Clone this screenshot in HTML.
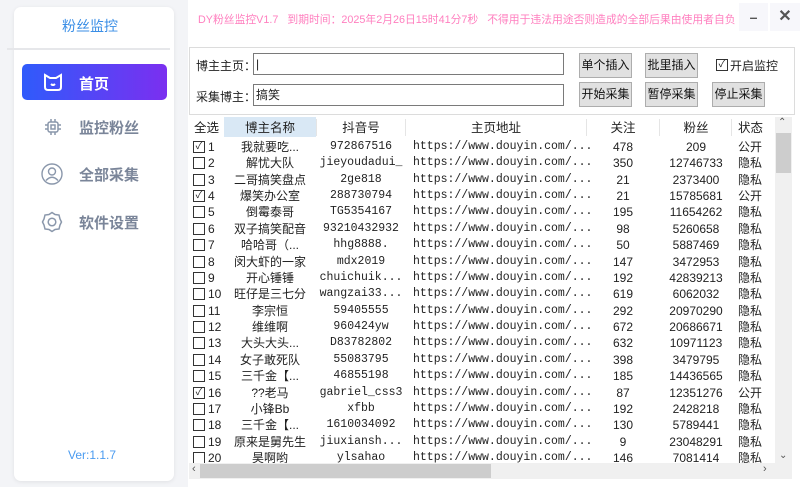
<!DOCTYPE html>
<html><head><meta charset="utf-8"><style>
*{margin:0;padding:0;box-sizing:border-box}
body{width:800px;height:487px;background:#fff;font-family:"Liberation Sans","Noto Sans CJK SC",sans-serif;position:relative;overflow:hidden;font-size:12px;color:#222}
.abs{position:absolute}
.side{left:0;top:0;width:188px;height:487px;background:#f3f4f7}
.card{left:14px;top:7px;width:160px;height:474px;background:#fff;border-radius:7px;box-shadow:0 1px 4px rgba(0,0,0,.08)}
.nav{position:absolute;left:79px;font-size:15px;font-weight:bold;color:#7a8599}
.btn{position:absolute;width:53px;height:25px;background:#e1e1e1;border:1px solid #adadad;font-size:12px;text-align:center;line-height:23px;color:#111}
.inp{position:absolute;left:253px;width:311px;height:22px;border:1px solid #7a7a7a;background:#fff;font-size:12px;line-height:20px;padding-left:2px}
.cb{position:absolute;width:12px;height:12px;border:1px solid #333;background:#fff}
.row{position:absolute;left:189px;width:585px;height:16px;font-size:12px;line-height:16px;white-space:nowrap}
.row span{position:absolute;top:0}
.c{text-align:center}
.m{font-family:"Liberation Mono","Noto Sans CJK SC",monospace;font-size:11.5px}
</style></head><body>
<div class="abs side"></div>
<div class="abs card"></div>
<div class="abs" style="left:14px;top:16px;width:152px;text-align:center;color:#3a8ee6;font-size:14px">粉丝监控</div>
<div class="abs" style="left:7px;top:48px;width:163px;height:2px;background:#e6e7ea"></div>
<div class="abs" style="left:22px;top:64px;width:145px;height:36px;border-radius:5px;background:linear-gradient(90deg,#2f5bfb,#7b2ff0)"></div>
<svg class="abs" style="left:42px;top:71px" width="22" height="22" viewBox="0 0 22 22" fill="none" stroke="#fff" stroke-width="2"><path d="M3 4 L8 7 H14 L19 4 V16 Q19 19 16 19 H6 Q3 19 3 16 Z"/><path d="M9 13 Q11 15 13 13"/></svg>
<div class="nav" style="top:73px;color:#fff">首页</div>
<svg class="abs" style="left:43px;top:117px" width="20" height="20" viewBox="0 0 20 20" fill="none" stroke="#8a97ab" stroke-width="1.5"><rect x="5" y="5" width="10" height="10" rx="2"/><rect x="8" y="8" width="4" height="4"/><path d="M8 2v3M12 2v3M8 15v3M12 15v3M2 8h3M2 12h3M15 8h3M15 12h3"/></svg>
<div class="nav" style="top:117px">监控粉丝</div>
<svg class="abs" style="left:41px;top:163px" width="22" height="22" viewBox="0 0 22 22" fill="none" stroke="#8a97ab" stroke-width="1.4"><circle cx="11" cy="11" r="10"/><circle cx="11" cy="8.5" r="3.5"/><path d="M5 17.5 Q11 11 17 17.5"/></svg>
<div class="nav" style="top:164px">全部采集</div>
<svg class="abs" style="left:41px;top:211px" width="22" height="22" viewBox="0 0 22 22" fill="none" stroke="#8a97ab" stroke-width="1.5"><path d="M11 1.5 L14 3.5 L18 4 L19 8 L20.5 11 L19 14 L18 18 L14 18.5 L11 20.5 L8 18.5 L4 18 L3 14 L1.5 11 L3 8 L4 4 L8 3.5 Z"/><circle cx="11" cy="11" r="3.8"/></svg>
<div class="nav" style="top:212px">软件设置</div>
<div class="abs" style="left:68px;top:448px;color:#4a9bf0;font-size:12px">Ver:1.1.7</div>

<div class="abs" style="left:198px;top:11px;color:#ff7fbf;font-size:10.8px;white-space:nowrap">DY粉丝监控V1.7 &nbsp;&nbsp;到期时间：2025年2月26日15时41分7秒 &nbsp;&nbsp;不得用于违法用途否则造成的全部后果由使用者自负</div>
<div class="abs" style="left:739px;top:3px;width:29px;height:28px;background:#f7f7fb;text-align:center;line-height:28px;font-size:14px;color:#555;font-weight:bold">–</div>
<div class="abs" style="left:770px;top:3px;width:30px;height:28px;background:#f7f7fb;text-align:center;line-height:28px;font-size:16px;color:#555;font-weight:bold">✕</div>

<div class="abs" style="left:189px;top:47px;width:606px;height:68px;border:1px solid #dcdcdc"></div>
<div class="abs" style="left:196px;top:57px">博主主页：</div>
<div class="inp" style="top:53px">|</div>
<div class="abs" style="left:196px;top:88px">采集博主：</div>
<div class="inp" style="top:84px">搞笑</div>
<div class="btn" style="left:579px;top:53px">单个插入</div>
<div class="btn" style="left:645px;top:53px">批里插入</div>
<div class="cb" style="left:716px;top:59px;line-height:10px;font-size:10px;text-align:center">✓</div>
<div class="abs" style="left:730px;top:57px">开启监控</div>
<div class="btn" style="left:579px;top:82px">开始采集</div>
<div class="btn" style="left:645px;top:82px">暂停采集</div>
<div class="btn" style="left:712px;top:82px">停止采集</div>

<div class="abs" style="left:224px;top:117px;width:92px;height:20px;background:#d9e8f5"></div>
<div class="abs" style="left:316px;top:119px;width:1px;height:17px;background:#e5e5e5"></div>
<div class="abs" style="left:405px;top:119px;width:1px;height:17px;background:#e5e5e5"></div>
<div class="abs" style="left:586px;top:119px;width:1px;height:17px;background:#e5e5e5"></div>
<div class="abs" style="left:659px;top:119px;width:1px;height:17px;background:#e5e5e5"></div>
<div class="abs" style="left:731px;top:119px;width:1px;height:17px;background:#e5e5e5"></div>
<div class="row" style="top:120px;font-size:12.5px">
<span style="left:5px">全选</span><span class="c" style="left:35px;width:92px">博主名称</span><span class="c" style="left:128px;width:88px">抖音号</span><span class="c" style="left:217px;width:180px">主页地址</span><span class="c" style="left:398px;width:72px">关注</span><span class="c" style="left:471px;width:72px">粉丝</span><span style="left:549px">状态</span>
</div>
<div id="rows"></div>
<div class="abs" style="left:775px;top:117px;width:17px;height:346px;background:#f0f0f0"></div>
<div class="abs" style="left:776px;top:133px;width:15px;height:40px;background:#cdcdcd"></div>
<div class="abs" style="left:778px;top:117px;font-size:10px;color:#555">⌃</div>
<div class="abs" style="left:779px;top:450px;font-size:10px;color:#555">⌄</div>
<div class="abs" style="left:189px;top:463px;width:586px;height:16px;background:#f0f0f0"></div>
<div class="abs" style="left:200px;top:464px;width:291px;height:14px;background:#cdcdcd"></div>
<div class="abs" style="left:192px;top:463px;font-size:11px;color:#555">‹</div>
<div class="abs" style="left:763px;top:463px;font-size:11px;color:#555">›</div>
<div class="abs" style="left:775px;top:463px;width:17px;height:16px;background:#f0f0f0"></div>
<script>
var d=[[1,"我就要吃...","972867516",478,209,"公开",1],[2,"解忧大队","jieyoudadui_",350,12746733,"隐私"],[3,"二哥搞笑盘点","2ge818",21,2373400,"隐私"],[4,"爆笑办公室","288730794",21,15785681,"公开",1],[5,"倒霉泰哥","TG5354167",195,11654262,"隐私"],[6,"双子搞笑配音","93210432932",98,5260658,"隐私"],[7,"哈哈哥（...","hhg8888.",50,5887469,"隐私"],[8,"闵大虾的一家","mdx2019",147,3472953,"隐私"],[9,"开心锤锤","chuichuik...",192,42839213,"隐私"],[10,"旺仔是三七分","wangzai33...",619,6062032,"隐私"],[11,"李宗恒","59405555",292,20970290,"隐私"],[12,"维维啊","960424yw",672,20686671,"隐私"],[13,"大头大头...","D83782802",632,10971123,"隐私"],[14,"女子敢死队","55083795",398,3479795,"隐私"],[15,"三千金【...","46855198",185,14436565,"隐私"],[16,"??老马","gabriel_css3",87,12351276,"公开",1],[17,"小锋Bb","xfbb",192,2428218,"隐私"],[18,"三千金【...","1610034092",130,5789441,"隐私"],[19,"原来是舅先生","jiuxiansh...",9,23048291,"隐私"],[20,"昊啊哟","ylsahao",146,7081414,"隐私"]];
var h="";d.forEach(function(r,i){var t=139+i*16.37;
h+='<div class="cb" style="left:193px;top:'+(t+2)+'px;line-height:10px;font-size:10px;text-align:center">'+(r[6]?'✓':'')+'</div>';
h+='<div class="row" style="top:'+t+'px"><span style="left:19px">'+r[0]+'</span><span class="c" style="left:35px;width:92px">'+r[1]+'</span><span class="c m" style="left:128px;width:88px">'+r[2]+'</span><span class="m" style="left:224px">https://www.douyin.com/...</span><span class="c" style="left:398px;width:72px">'+r[3]+'</span><span class="c" style="left:471px;width:72px">'+r[4]+'</span><span style="left:549px">'+r[5]+'</span></div>';});
document.getElementById("rows").innerHTML=h;
</script>
</body></html>
